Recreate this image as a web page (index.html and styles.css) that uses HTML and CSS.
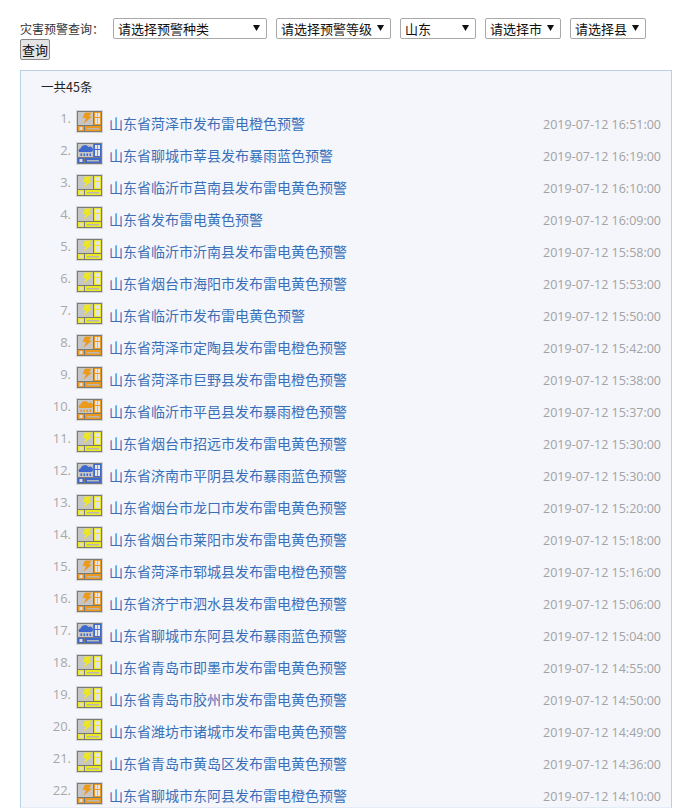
FILE: index.html
```html
<!DOCTYPE html>
<html lang="zh">
<head>
  <meta charset="UTF-8" />
  <title>灾害预警查询</title>
  <link rel="stylesheet" href="styles.css">
</head>
<body>
  <svg class="defs" width="0" height="0">
    <symbol id="frame" viewBox="0 0 27 23">
      <rect width="27" height="23" fill="#d6d6d6"/>
      <rect x="1" y="1" width="25" height="21" fill="#7a7a7a"/>
      <rect x="2" y="2" width="15" height="13" fill="#c6c6c6"/>
      <rect x="18" y="2" width="7" height="13" fill="currentColor"/>
      <rect x="19" y="3" width="5" height="4" fill="#e6e6e6"/>
      <rect x="19" y="8" width="5" height="6" fill="#e6e6e6"/>
      <path d="M21 3h1v11h-1z" fill="currentColor" opacity=".6"/>
      <rect x="2" y="16" width="6" height="5" fill="currentColor"/>
      <rect x="3.500" y="17" width="3" height="3" fill="#dcdcdc"/>
      <rect x="9" y="16" width="16" height="5" fill="currentColor"/>
      <rect x="11" y="18" width="12" height="1.500" fill="#b8b8b8"/>
    </symbol>
    <symbol id="bolt" viewBox="0 0 27 23">
      <use href="#frame" width="27" height="23"/>
      <path d="M9 2.500h6.500l-2.500 4h3l-8.500 7.500 2.500-6H6.500z" fill="currentColor"/>
    </symbol>
    <symbol id="rain" viewBox="0 0 27 23">
      <use href="#frame" width="27" height="23"/>
      <path d="M3 10a2.500 2.500 0 0 1 1.500-3.500 4.500 4.500 0 0 1 8-1.500 2.800 2.800 0 0 1 3 5z" fill="currentColor"/>
      <path d="M4.500 11.500h1.500v2.500H4.500zM7.500 11.500h1.500v2.500H7.500zM10.500 11.500h1.500v2.500h-1.500zM13.500 11.500h1.500v2.500h-1.500z" fill="currentColor"/>
    </symbol>
  </svg>

  <form class="filter">
    <label class="filter-label">灾害预警查询：</label>
    <select class="sel sel-type"><option>请选择预警种类</option></select>
    <select class="sel sel-level"><option>请选择预警等级</option></select>
    <select class="sel sel-short"><option>山东</option></select>
    <select class="sel sel-short"><option>请选择市</option></select>
    <select class="sel sel-short"><option>请选择县</option></select>
    <button type="button" class="query">查询</button>
  </form>

  <div class="panel">
    <div class="total">一共45条</div>
    <ol class="alerts">
      <li><span class="num">1.</span><svg class="icon orange"><use href="#bolt"/></svg><a href="#">山东省菏泽市发布雷电橙色预警</a><time>2019-07-12 16:51:00</time></li>
      <li><span class="num">2.</span><svg class="icon blue"><use href="#rain"/></svg><a href="#">山东省聊城市莘县发布暴雨蓝色预警</a><time>2019-07-12 16:19:00</time></li>
      <li><span class="num">3.</span><svg class="icon yellow"><use href="#bolt"/></svg><a href="#">山东省临沂市莒南县发布雷电黄色预警</a><time>2019-07-12 16:10:00</time></li>
      <li><span class="num">4.</span><svg class="icon yellow"><use href="#bolt"/></svg><a href="#">山东省发布雷电黄色预警</a><time>2019-07-12 16:09:00</time></li>
      <li><span class="num">5.</span><svg class="icon yellow"><use href="#bolt"/></svg><a href="#">山东省临沂市沂南县发布雷电黄色预警</a><time>2019-07-12 15:58:00</time></li>
      <li><span class="num">6.</span><svg class="icon yellow"><use href="#bolt"/></svg><a href="#">山东省烟台市海阳市发布雷电黄色预警</a><time>2019-07-12 15:53:00</time></li>
      <li><span class="num">7.</span><svg class="icon yellow"><use href="#bolt"/></svg><a href="#">山东省临沂市发布雷电黄色预警</a><time>2019-07-12 15:50:00</time></li>
      <li><span class="num">8.</span><svg class="icon orange"><use href="#bolt"/></svg><a href="#">山东省菏泽市定陶县发布雷电橙色预警</a><time>2019-07-12 15:42:00</time></li>
      <li><span class="num">9.</span><svg class="icon orange"><use href="#bolt"/></svg><a href="#">山东省菏泽市巨野县发布雷电橙色预警</a><time>2019-07-12 15:38:00</time></li>
      <li><span class="num">10.</span><svg class="icon orange"><use href="#rain"/></svg><a href="#">山东省临沂市平邑县发布暴雨橙色预警</a><time>2019-07-12 15:37:00</time></li>
      <li><span class="num">11.</span><svg class="icon yellow"><use href="#bolt"/></svg><a href="#">山东省烟台市招远市发布雷电黄色预警</a><time>2019-07-12 15:30:00</time></li>
      <li><span class="num">12.</span><svg class="icon blue"><use href="#rain"/></svg><a href="#">山东省济南市平阴县发布暴雨蓝色预警</a><time>2019-07-12 15:30:00</time></li>
      <li><span class="num">13.</span><svg class="icon yellow"><use href="#bolt"/></svg><a href="#">山东省烟台市龙口市发布雷电黄色预警</a><time>2019-07-12 15:20:00</time></li>
      <li><span class="num">14.</span><svg class="icon yellow"><use href="#bolt"/></svg><a href="#">山东省烟台市莱阳市发布雷电黄色预警</a><time>2019-07-12 15:18:00</time></li>
      <li><span class="num">15.</span><svg class="icon orange"><use href="#bolt"/></svg><a href="#">山东省菏泽市郓城县发布雷电橙色预警</a><time>2019-07-12 15:16:00</time></li>
      <li><span class="num">16.</span><svg class="icon orange"><use href="#bolt"/></svg><a href="#">山东省济宁市泗水县发布雷电橙色预警</a><time>2019-07-12 15:06:00</time></li>
      <li><span class="num">17.</span><svg class="icon blue"><use href="#rain"/></svg><a href="#">山东省聊城市东阿县发布暴雨蓝色预警</a><time>2019-07-12 15:04:00</time></li>
      <li><span class="num">18.</span><svg class="icon yellow"><use href="#bolt"/></svg><a href="#">山东省青岛市即墨市发布雷电黄色预警</a><time>2019-07-12 14:55:00</time></li>
      <li><span class="num">19.</span><svg class="icon yellow"><use href="#bolt"/></svg><a href="#">山东省青岛市胶州市发布雷电黄色预警</a><time>2019-07-12 14:50:00</time></li>
      <li><span class="num">20.</span><svg class="icon yellow"><use href="#bolt"/></svg><a href="#">山东省潍坊市诸城市发布雷电黄色预警</a><time>2019-07-12 14:49:00</time></li>
      <li><span class="num">21.</span><svg class="icon yellow"><use href="#bolt"/></svg><a href="#">山东省青岛市黄岛区发布雷电黄色预警</a><time>2019-07-12 14:36:00</time></li>
      <li><span class="num">22.</span><svg class="icon orange"><use href="#bolt"/></svg><a href="#">山东省聊城市东阿县发布雷电橙色预警</a><time>2019-07-12 14:10:00</time></li>
    </ol>
  </div>
</body>
</html>
```

FILE: styles.css
```css
html, body {
  margin: 0;
  padding: 0;
  height: 809px;
  overflow: hidden;
  background: #fff;
  font-family: "Noto Sans CJK SC", "Open Sans", sans-serif;
}

body {
  padding: 18px 6px 0 20px;
  box-sizing: border-box;
}

.defs {
  position: absolute;
}

.filter {
  display: flex;
  flex-wrap: wrap;
  align-items: center;
  column-gap: 9px;
  margin-bottom: 10px;
}

.filter-label {
  width: 84px;
  font-size: 12px;
  color: #333;
  white-space: nowrap;
}

.sel {
  appearance: none;
  height: 21px;
  padding: 0 4px;
  border: 1px solid #a9a9a9;
  border-radius: 2px;
  background: #fff url("data:image/svg+xml,%3Csvg xmlns='http://www.w3.org/2000/svg' width='7' height='6'%3E%3Cpath d='M0 0h7L3.500 6z' fill='%23111'/%3E%3C/svg%3E") no-repeat right 6px top 6px;
  font-family: inherit;
  font-size: 13px;
  line-height: 19px;
  color: #111;
}

.sel-type { width: 154px; }
.sel-level { width: 115px; }
.sel-short { width: 76px; }

.query {
  width: 30px;
  height: 21px;
  padding: 0;
  border: 1px solid #888;
  border-radius: 2px;
  background: #e4e4e4;
  font-family: inherit;
  font-size: 13px;
  line-height: 19px;
  color: #111;
}

.panel {
  height: 729px;
  padding: 7px 10px 0 20px;
  border: 1px solid #bad0e8;
  border-bottom-color: #e4edf7;
  background: #f5f6fb;
}

.total {
  font-size: 12.500px;
  line-height: 18px;
  color: #222;
  margin-bottom: 11px;
}

.alerts {
  list-style: none;
  margin: 0;
  padding: 0;
}

.alerts li {
  display: flex;
  align-items: center;
  height: 32px;
  font-size: 14px;
}

.num {
  width: 30px;
  margin-right: 5px;
  margin-top: -11px;
  font-family: "Open Sans", sans-serif;
  font-size: 13px;
  color: #a8a8a8;
  text-align: right;
}

.icon {
  width: 27px;
  height: 23px;
  margin-right: 6px;
  margin-top: -3px;
  flex: none;
}

.orange { color: #ec9a1e; }
.yellow { color: #ebe822; }
.blue { color: #3f68cf; }

.alerts a {
  color: #3a6fb8;
  text-decoration: none;
}

.alerts time {
  margin-left: auto;
  margin-top: 2px;
  font-family: "Open Sans", sans-serif;
  font-size: 12.500px;
  color: #a3a3a3;
}
```
